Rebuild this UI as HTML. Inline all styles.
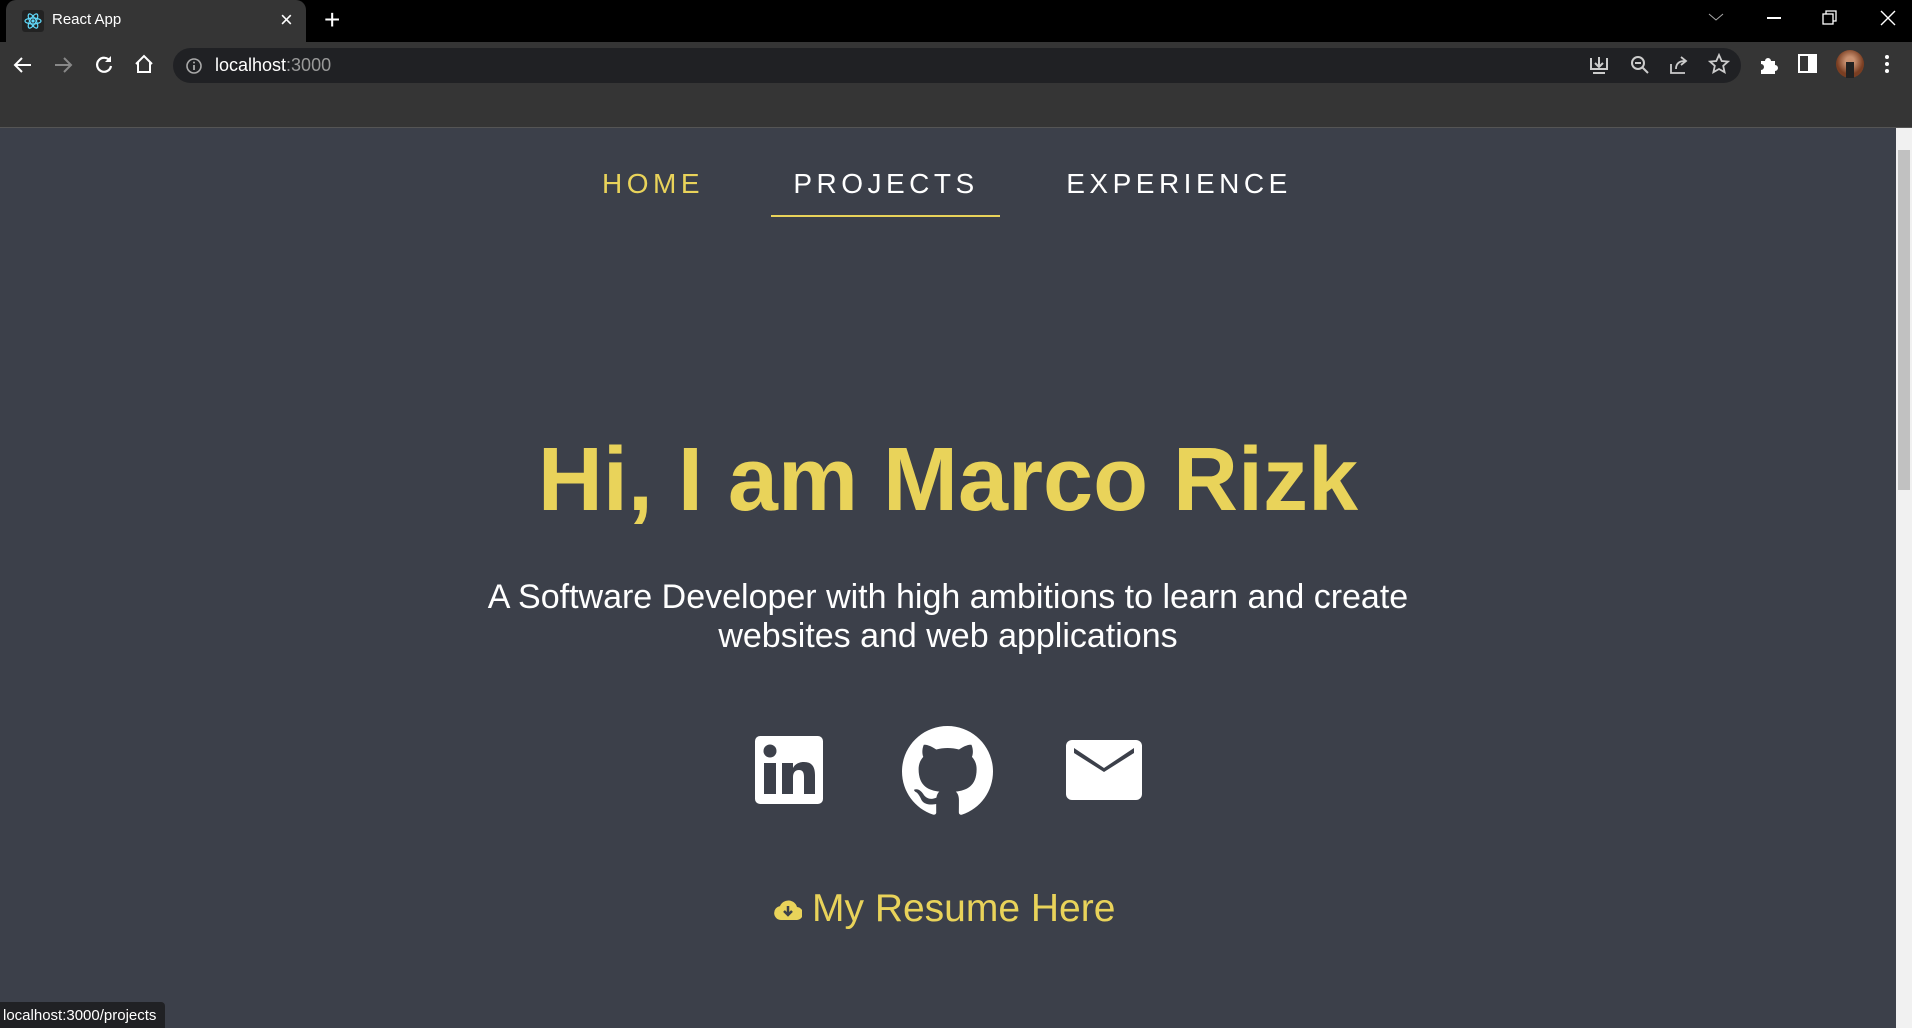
<!DOCTYPE html>
<html><head><meta charset="utf-8"><style>
*{margin:0;padding:0;box-sizing:border-box}
body{width:1912px;height:1028px;overflow:hidden;background:#3c404a;font-family:"Liberation Sans",sans-serif;position:relative}
.tabbar{position:absolute;left:0;top:0;width:1912px;height:42px;background:#000}
.tab{position:absolute;left:6px;top:0;width:300px;height:42px;background:#353535;border-radius:10px 10px 0 0;color:#fff;font-size:15px}
.toolbar{position:absolute;left:0;top:42px;width:1912px;height:86px;background:#353535;border-bottom:1px solid #555}
.omni{position:absolute;left:173px;top:6px;width:1568px;height:35px;background:#202124;border-radius:18px;color:#fff;font-size:18px}
.nav a{position:absolute;top:168px;font-size:28px;letter-spacing:4.5px;color:#fff;text-decoration:none;transform:translateX(-50%)}
h1{position:absolute;left:0;width:1896px;top:429px;text-align:center;color:#e9d35a;font-size:90px;font-weight:bold}
.sub{position:absolute;left:0;width:1896px;top:578px;text-align:center;color:#fff;font-size:34px;line-height:39px}
.res{position:absolute;top:887px;color:#e9d35a;font-size:39px}
.sb{position:absolute;right:0;top:128px;width:16px;height:900px;background:#f1f1f1}
.sb div{position:absolute;left:2px;top:22px;width:12px;height:340px;background:#c1c1c1}
.status{position:absolute;left:0;bottom:0;width:165px;height:26px;background:#202124;color:#fff;font-size:15px;padding:5px 3px;border-radius:0 4px 0 0}
</style></head><body>
<div class="tabbar">
 <div class="tab">
  <svg style="position:absolute;left:16px;top:10px" width="22" height="22" viewBox="0 0 22 22"><rect width="22" height="22" rx="3" fill="#222"/><g fill="none" stroke="#61dafb" stroke-width="1.2"><ellipse cx="11" cy="11" rx="8" ry="3"/><ellipse cx="11" cy="11" rx="8" ry="3" transform="rotate(60 11 11)"/><ellipse cx="11" cy="11" rx="8" ry="3" transform="rotate(120 11 11)"/></g><circle cx="11" cy="11" r="1.6" fill="#61dafb"/></svg>
  <span style="position:absolute;left:46px;top:11px">React App</span>
  <span style="position:absolute;left:274px;top:7px;font-size:22px">×</span>
 </div>
 <span style="position:absolute;left:324px;top:4px;color:#fff;font-size:28px">+</span>
 <svg style="position:absolute;left:1708px;top:12px" width="16" height="10"><path d="M1 2l7 6 7-6" stroke="#aaa" fill="none"/></svg>
 <div style="position:absolute;left:1767px;top:17px;width:14px;height:1.5px;background:#fff"></div>
 <svg style="position:absolute;left:1822px;top:10px" width="16" height="16"><rect x="1" y="4" width="10" height="10" stroke="#fff" fill="none" stroke-width="1.3"/><path d="M4 4V1h10v10h-3" stroke="#fff" fill="none" stroke-width="1.3"/></svg>
 <svg style="position:absolute;left:1880px;top:10px" width="16" height="16"><path d="M1 1l14 14M15 1L1 15" stroke="#fff" stroke-width="1.4"/></svg>
</div>
<div class="toolbar">
 <svg style="position:absolute;left:12px;top:12px" width="22" height="22"><path d="M19 11H4M10 4l-7 7 7 7" stroke="#fff" stroke-width="2" fill="none"/></svg>
 <svg style="position:absolute;left:52px;top:12px" width="22" height="22"><path d="M3 11h15M12 4l7 7-7 7" stroke="#888" stroke-width="2" fill="none"/></svg>
 <svg style="position:absolute;left:93px;top:11px" width="22" height="22"><path d="M17 8A7 7 0 1 0 18 13" stroke="#fff" stroke-width="2.2" fill="none"/><path d="M18 3v6h-6z" fill="#fff"/></svg>
 <svg style="position:absolute;left:133px;top:11px" width="22" height="22"><path d="M3 11L11 3l8 8M5 9v10h12V9" stroke="#fff" stroke-width="2" fill="none"/></svg>
 <div class="omni">
  <svg style="position:absolute;left:12px;top:9px" width="18" height="18"><circle cx="9" cy="9" r="7" stroke="#aaa" stroke-width="1.6" fill="none"/><path d="M9 8v5" stroke="#aaa" stroke-width="1.8"/><circle cx="9" cy="5.5" r="1" fill="#aaa"/></svg>
  <span style="position:absolute;left:42px;top:7px">localhost<span style="color:#999">:3000</span></span>
 </div>
 <svg style="position:absolute;left:1588px;top:12px" width="22" height="22"><path d="M3 4v11h16V4M11 3v9M7 9l4 4 4-4M5 19h12" stroke="#ccc" stroke-width="2" fill="none"/></svg>
 <svg style="position:absolute;left:1629px;top:12px" width="22" height="22"><circle cx="9" cy="9" r="6" stroke="#ccc" stroke-width="2" fill="none"/><path d="M6 9h6M13 13l6 6" stroke="#ccc" stroke-width="2"/></svg>
 <svg style="position:absolute;left:1668px;top:12px" width="22" height="22"><path d="M3 10v9h14M8 15c0-6 4-8 9-8M13 3l5 4-5 4" stroke="#ccc" stroke-width="1.8" fill="none"/></svg>
 <svg style="position:absolute;left:1708px;top:11px" width="22" height="22"><path d="M11 2l2.7 6 6.3.6-4.8 4.2 1.4 6.4L11 16l-5.6 3.2 1.4-6.4L2 8.6 8.3 8z" stroke="#ccc" stroke-width="1.8" fill="none"/></svg>
 <svg style="position:absolute;left:1758px;top:12px" width="22" height="22"><path d="M3 7h4a3 3 0 0 1 6 0h4v4a3 3 0 0 1 0 6v3H3v-4a3 3 0 0 0 0-6z" fill="#fff"/></svg>
 <svg style="position:absolute;left:1798px;top:12px" width="20" height="20"><rect x="1" y="1" width="17" height="17" stroke="#fff" stroke-width="2" fill="none"/><rect x="10" y="1" width="8" height="17" fill="#fff"/></svg>
 <div style="position:absolute;left:1836px;top:8px;width:28px;height:28px;border-radius:50%;background:radial-gradient(circle at 50% 40%,#c89070 20%,#7a3e22 60%)"><div style="position:absolute;left:10px;top:12px;width:8px;height:16px;background:#222"></div></div>
 <svg style="position:absolute;left:1884px;top:12px" width="6" height="22"><circle cx="3" cy="3" r="2" fill="#fff"/><circle cx="3" cy="10" r="2" fill="#fff"/><circle cx="3" cy="17" r="2" fill="#fff"/></svg>
</div>
<div class="nav">
 <a style="left:653px;color:#e9d35a">HOME</a>
 <a style="left:886px">PROJECTS</a>
 <a style="left:1179px">EXPERIENCE</a>
</div>
<div style="position:absolute;left:771px;top:215px;width:229px;height:2px;background:#e9d35a"></div>
<h1>Hi, I am Marco Rizk</h1>
<div class="sub">A Software Developer with high ambitions to learn and create<br>websites and web applications</div>
<svg style="position:absolute;left:755px;top:736px" width="68" height="68" viewBox="0 0 68 68"><rect width="68" height="68" rx="5" fill="#fff"/><circle cx="15" cy="15" r="6.5" fill="#3c404a"/><rect x="9" y="27" width="12" height="31" fill="#3c404a"/><path d="M27 27h11v5c2-4 6-6 11-6 8 0 11 5 11 13v19H49V41c0-4-1-7-5-7s-6 3-6 7v17H27z" fill="#3c404a"/></svg>
<svg style="position:absolute;left:902px;top:726px" width="91" height="91" viewBox="0 0 16 16"><path fill="#fff" d="M8 0C3.58 0 0 3.58 0 8c0 3.54 2.290 6.530 5.470 7.590.4.07.55-.17.55-.38 0-.19-.01-.82-.01-1.490-2.010.37-2.530-.49-2.690-.94-.09-.23-.48-.94-.82-1.130-.28-.15-.68-.52-.01-.53.63-.01 1.080.58 1.230.82.72 1.210 1.870.87 2.330.66.07-.52.28-.87.51-1.070-1.780-.2-3.640-.89-3.640-3.950 0-.87.31-1.590.82-2.150-.08-.2-.36-1.020.08-2.120 0 0 .67-.21 2.200.82.64-.18 1.320-.27 2-.27.68 0 1.360.09 2 .27 1.530-1.040 2.200-.82 2.200-.82.44 1.100.16 1.920.08 2.120.51.56.82 1.270.82 2.150 0 3.070-1.870 3.750-3.650 3.950.29.25.54.73.54 1.480 0 1.070-.01 1.930-.01 2.200 0 .21.15.46.55.38A8.013 8.013 0 0016 8c0-4.420-3.580-8-8-8z"/></svg>
<svg style="position:absolute;left:1066px;top:740px" width="76" height="60" viewBox="0 0 76 60"><rect width="76" height="60" rx="6" fill="#fff"/><path d="M8 8l30 20 30-20v5L38 32 8 13z" fill="#3c404a"/></svg>
<svg style="position:absolute;left:774px;top:900px" width="28" height="20" viewBox="0 0 28 20"><path d="M7 20a7 7 0 0 1-1-13.9A9 9 0 0 1 23 7a6.5 6.5 0 0 1-1 13z" fill="#e9d35a"/><path d="M14 6v8M10 11l4 4 4-4" stroke="#3c404a" stroke-width="2.5" fill="none"/></svg>
<div class="res" style="left:812px">My Resume Here</div>
<div class="sb"><div></div></div>
<div class="status">localhost:3000/projects</div>
</body></html>
